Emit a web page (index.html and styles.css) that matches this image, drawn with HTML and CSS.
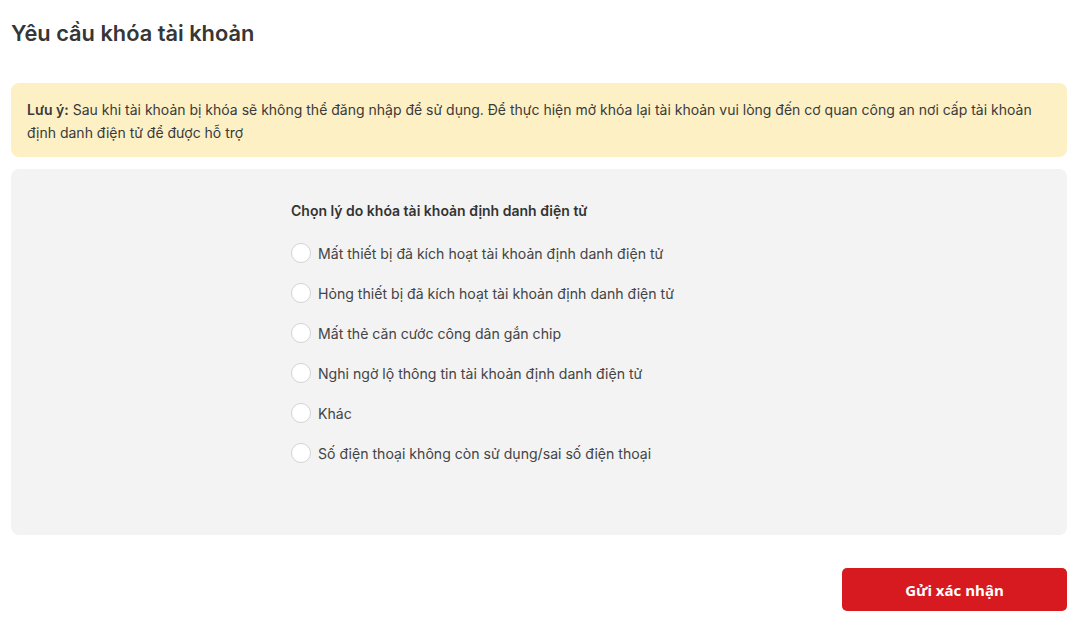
FILE: index.html
```html
<!DOCTYPE html>
<html lang="vi">
  <head>
    <meta charset="UTF-8" />
    <meta name="viewport" content="width=device-width, initial-scale=1.0" />
    <title>Yêu cầu khóa tài khoản</title>
    <link rel="stylesheet" href="styles.css">
  </head>

  <body>
    <div class="page">
      <h1 class="title">Yêu cầu khóa tài khoản</h1>

      <div class="notice">
        <p><b>Lưu ý:</b> Sau khi tài khoản bị khóa sẽ không thể đăng nhập để sử dụng. Để thực hiện mở khóa lại tài khoản vui lòng đến cơ quan công an nơi cấp tài khoản định danh điện tử để được hỗ trợ</p>
      </div>

      <div class="panel">
        <form class="reason-form">
          <h3 class="reason-title">Chọn lý do khóa tài khoản định danh điện tử</h3>
          <label class="option"><input type="radio" name="reason" /><span>Mất thiết bị đã kích hoạt tài khoản định danh điện tử</span></label>
          <label class="option"><input type="radio" name="reason" /><span>Hỏng thiết bị đã kích hoạt tài khoản định danh điện tử</span></label>
          <label class="option"><input type="radio" name="reason" /><span>Mất thẻ căn cước công dân gắn chip</span></label>
          <label class="option"><input type="radio" name="reason" /><span>Nghi ngờ lộ thông tin tài khoản định danh điện tử</span></label>
          <label class="option"><input type="radio" name="reason" /><span>Khác</span></label>
          <label class="option"><input type="radio" name="reason" /><span>Số điện thoại không còn sử dụng/sai số điện thoại</span></label>
        </form>
      </div>

      <div class="actions">
        <button type="button" class="button">Gửi xác nhận</button>
      </div>
    </div>
  </body>
</html>
```

FILE: styles.css
```css
body {
  margin: 0;
  font-family: Inter, "Noto Sans", Arial, sans-serif;
  color: #333;
  background: #fff;
}

.page {
  padding: 0 20px 0 11px;
}

.title {
  font-size: 21.8px;
  font-weight: 600;
  color: #363636;
  margin: 0;
  padding: 20px 0 0;
  line-height: 26px;
  height: 63px;
}

.notice {
  background-color: #fdf0c5;
  border-radius: 8px;
  padding: 15px 16px 13px;
}

.notice p {
  margin: 0;
  font-size: 14px;
  line-height: 23px;
  color: #3a3a3a;
}

.notice b {
  font-weight: 600;
}

.panel {
  background-color: #f3f3f3;
  border-radius: 8px;
  margin-top: 12px;
  height: 366px;
  box-sizing: border-box;
  padding-top: 32px;
}

.reason-form {
  width: 496px;
  margin: 0 auto;
}

.reason-title {
  font-size: 14px;
  font-weight: 600;
  color: #333;
  margin: 0 0 12px;
  line-height: 20px;
}

.option {
  display: flex;
  align-items: center;
  height: 40px;
  font-size: 14.1px;
  color: #444;
  cursor: pointer;
}

.option input {
  appearance: none;
  width: 20px;
  height: 20px;
  margin: 0 7px 0 0;
  border: 1px solid #d3d3d3;
  border-radius: 50%;
  background: #fff;
  flex-shrink: 0;
}

.option input:checked {
  border: 6px solid #d71920;
}

.actions {
  display: flex;
  justify-content: flex-end;
  padding-top: 33px;
}

.button {
  width: 225px;
  height: 43px;
  border: none;
  border-radius: 5px;
  background-color: #d71920;
  color: #fff;
  font-family: "Open Sans", "Noto Sans", Arial, sans-serif;
  font-weight: 700;
  font-size: 15px;
  cursor: pointer;
}
```
